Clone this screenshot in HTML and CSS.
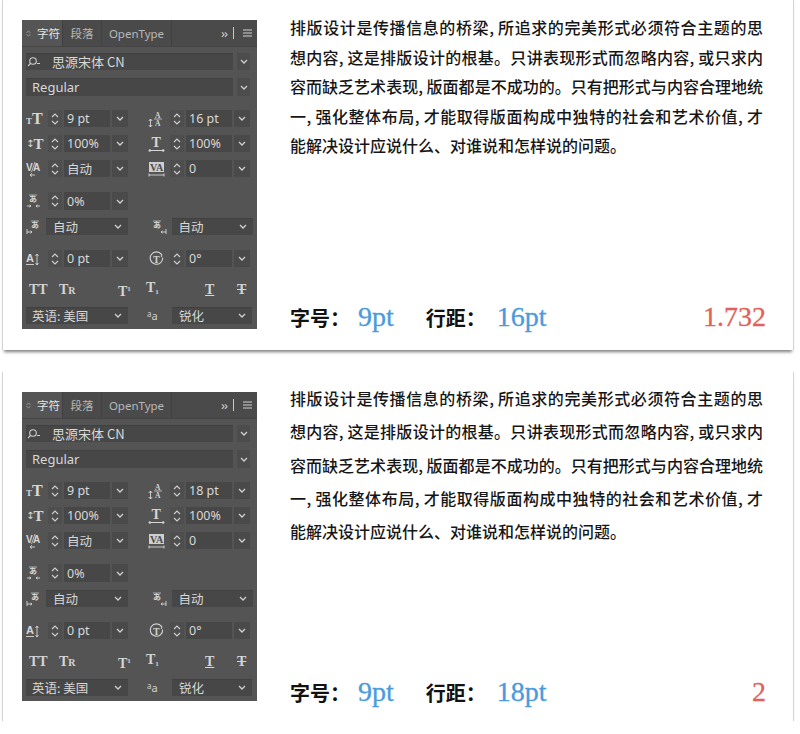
FILE: index.html
```html
<!DOCTYPE html>
<html lang="zh-CN">
<head>
<meta charset="utf-8">
<title>排版 行距对比</title>
<link rel="stylesheet" href="styles.css">
</head>
<body>
<div class="page">

  <section class="card card-a">
    <div class="panel">
      <div class="tabs">
        <div class="tab active"><svg class="grip" width="5" height="7" viewBox="0 0 5 7"><path d="M0.5 3 L2.5 0.8 L4.5 3 M0.5 4 L2.5 6.2 L4.5 4" fill="none" stroke="#9a9a9a" stroke-width="0.9"/></svg>字符</div>
        <div class="tab t2">段落</div>
        <div class="tab t3">OpenType</div>
        <div class="tabtools"><span class="more">››</span><span class="vbar"></span><svg width="9" height="8" viewBox="0 0 9 8"><path d="M0 1h9M0 4h9M0 7h9" stroke="#cfcfcf" stroke-width="1.1"/></svg></div>
      </div>

      <div class="prow frow">
        <div class="field wide"><svg class="search" width="14" height="10" viewBox="0 0 14 10"><circle cx="6" cy="4" r="3.3" fill="none" stroke="#cfcfcf" stroke-width="1.1"/><path d="M3.6 6.4 L1 9 M10 6.5 H13" stroke="#cfcfcf" stroke-width="1.1"/></svg><span class="fname">思源宋体 CN</span></div>
        <div class="chev sep"><svg width="8" height="5" viewBox="0 0 8 5"><path d="M1 1 L4 4 L7 1" fill="none" stroke="#d0d0d0" stroke-width="1.3"/></svg></div>
      </div>

      <div class="prow srow">
        <div class="field wide"><span class="reg">Regular</span></div>
        <div class="chev sep"><svg width="8" height="5" viewBox="0 0 8 5"><path d="M1 1 L4 4 L7 1" fill="none" stroke="#d0d0d0" stroke-width="1.3"/></svg></div>
      </div>

      <div class="prow r1">
        <div class="half">
          <span class="ico ico-size"><span class="small">T</span>T</span>
          <span class="spin"><svg width="8" height="14" viewBox="0 0 8 14"><path d="M1 5 L4 2 L7 5 M1 9 L4 12 L7 9" fill="none" stroke="#cfcfcf" stroke-width="1.1"/></svg></span>
          <span class="inp">9 pt</span>
          <span class="chev"><svg width="8" height="5" viewBox="0 0 8 5"><path d="M1 1 L4 4 L7 1" fill="none" stroke="#d0d0d0" stroke-width="1.3"/></svg></span>
        </div>
        <div class="half">
          <span class="ico"><svg width="16" height="18" viewBox="0 0 16 18"><text x="7" y="7.5" font-size="7.5" font-family="Liberation Serif" fill="#d6d6d6">A</text><text x="7" y="16" font-size="7.5" font-family="Liberation Serif" fill="#d6d6d6">A</text><path d="M6 9 H14" stroke="#d6d6d6" stroke-width="0.8"/><path d="M2.5 9 V17 M0.8 11 L2.5 9 L4.2 11 M0.8 15 L2.5 17 L4.2 15" fill="none" stroke="#d6d6d6" stroke-width="0.9"/></svg></span>
          <span class="spin"><svg width="8" height="14" viewBox="0 0 8 14"><path d="M1 5 L4 2 L7 5 M1 9 L4 12 L7 9" fill="none" stroke="#cfcfcf" stroke-width="1.1"/></svg></span>
          <span class="inp">16 pt</span>
          <span class="chev"><svg width="8" height="5" viewBox="0 0 8 5"><path d="M1 1 L4 4 L7 1" fill="none" stroke="#d0d0d0" stroke-width="1.3"/></svg></span>
        </div>
      </div>

      <div class="prow r2">
        <div class="half">
          <span class="ico ico-vs"><span class="arr">↕</span>T</span>
          <span class="spin"><svg width="8" height="14" viewBox="0 0 8 14"><path d="M1 5 L4 2 L7 5 M1 9 L4 12 L7 9" fill="none" stroke="#cfcfcf" stroke-width="1.1"/></svg></span>
          <span class="inp">100%</span>
          <span class="chev"><svg width="8" height="5" viewBox="0 0 8 5"><path d="M1 1 L4 4 L7 1" fill="none" stroke="#d0d0d0" stroke-width="1.3"/></svg></span>
        </div>
        <div class="half">
          <span class="ico"><svg width="17" height="18" viewBox="0 0 17 18"><text x="3.5" y="12" font-size="14" font-weight="bold" font-family="Liberation Serif" fill="#d6d6d6">T</text><path d="M1.5 15.5 H15.5" stroke="#d6d6d6" stroke-width="1"/><circle cx="1.8" cy="15.5" r="1.2" fill="#d6d6d6"/><circle cx="15.2" cy="15.5" r="1.2" fill="#d6d6d6"/></svg></span>
          <span class="spin"><svg width="8" height="14" viewBox="0 0 8 14"><path d="M1 5 L4 2 L7 5 M1 9 L4 12 L7 9" fill="none" stroke="#cfcfcf" stroke-width="1.1"/></svg></span>
          <span class="inp">100%</span>
          <span class="chev"><svg width="8" height="5" viewBox="0 0 8 5"><path d="M1 1 L4 4 L7 1" fill="none" stroke="#d0d0d0" stroke-width="1.3"/></svg></span>
        </div>
      </div>

      <div class="prow r3">
        <div class="half">
          <span class="ico"><svg width="15" height="18" viewBox="0 0 15 18"><text x="0" y="11" font-size="10" font-family="Liberation Sans" fill="#d6d6d6">V</text><text x="7" y="11" font-size="10" font-family="Liberation Sans" fill="#d6d6d6">A</text><path d="M5.5 12 L9 2" stroke="#d6d6d6" stroke-width="0.8"/><path d="M9 15 H4 M6 13.3 L4 15 L6 16.7" fill="none" stroke="#d6d6d6" stroke-width="0.9"/></svg></span>
          <span class="spin"><svg width="8" height="14" viewBox="0 0 8 14"><path d="M1 5 L4 2 L7 5 M1 9 L4 12 L7 9" fill="none" stroke="#cfcfcf" stroke-width="1.1"/></svg></span>
          <span class="inp cjk">自动</span>
          <span class="chev"><svg width="8" height="5" viewBox="0 0 8 5"><path d="M1 1 L4 4 L7 1" fill="none" stroke="#d0d0d0" stroke-width="1.3"/></svg></span>
        </div>
        <div class="half">
          <span class="ico"><svg width="17" height="18" viewBox="0 0 17 18"><rect x="1" y="2" width="15" height="10" fill="#cfcfcf"/><text x="2" y="11" font-size="10" font-weight="bold" font-family="Liberation Serif" fill="#4a4a4a">VA</text><path d="M1 15 H16" stroke="#d6d6d6" stroke-width="0.9"/><path d="M1 13.5 V16.5 M16 13.5 V16.5" stroke="#d6d6d6" stroke-width="0.9"/></svg></span>
          <span class="spin"><svg width="8" height="14" viewBox="0 0 8 14"><path d="M1 5 L4 2 L7 5 M1 9 L4 12 L7 9" fill="none" stroke="#cfcfcf" stroke-width="1.1"/></svg></span>
          <span class="inp">0</span>
          <span class="chev"><svg width="8" height="5" viewBox="0 0 8 5"><path d="M1 1 L4 4 L7 1" fill="none" stroke="#d0d0d0" stroke-width="1.3"/></svg></span>
        </div>
      </div>

      <div class="prow r4">
        <div class="half">
          <span class="ico"><svg width="15" height="18" viewBox="0 0 15 18"><text x="3" y="10" font-size="8" font-family="Noto Sans CJK JP" fill="#d6d6d6">あ</text><path d="M3 3 H11" stroke="#d6d6d6" stroke-width="0.7"/><path d="M1 14 H5 M3.5 12.8 L5 14 L3.5 15.2 M14 14 H10 M11.5 12.8 L10 14 L11.5 15.2" fill="none" stroke="#d6d6d6" stroke-width="0.9"/></svg></span>
          <span class="spin"><svg width="8" height="14" viewBox="0 0 8 14"><path d="M1 5 L4 2 L7 5 M1 9 L4 12 L7 9" fill="none" stroke="#cfcfcf" stroke-width="1.1"/></svg></span>
          <span class="inp">0%</span>
          <span class="chev"><svg width="8" height="5" viewBox="0 0 8 5"><path d="M1 1 L4 4 L7 1" fill="none" stroke="#d0d0d0" stroke-width="1.3"/></svg></span>
        </div>
      </div>

      <div class="prow r5">
        <div class="half dd">
          <span class="ico"><svg width="15" height="18" viewBox="0 0 15 18"><text x="5" y="10" font-size="8" font-family="Noto Sans CJK JP" fill="#d6d6d6">あ</text><path d="M5 3 H13" stroke="#d6d6d6" stroke-width="0.7"/><path d="M1 11 V16 M1 14 H6 M4.5 12.8 L6 14 L4.5 15.2" fill="none" stroke="#d6d6d6" stroke-width="0.9"/></svg></span>
          <span class="field dfield"><span class="cjk">自动</span><svg width="8" height="5" viewBox="0 0 8 5"><path d="M1 1 L4 4 L7 1" fill="none" stroke="#d0d0d0" stroke-width="1.3"/></svg></span>
        </div>
        <div class="half dd dd-r">
          <span class="ico"><svg width="15" height="18" viewBox="0 0 15 18"><text x="1" y="10" font-size="8" font-family="Noto Sans CJK JP" fill="#d6d6d6">あ</text><path d="M1 3 H9" stroke="#d6d6d6" stroke-width="0.7"/><path d="M14 11 V16 M14 14 H9 M10.5 12.8 L9 14 L10.5 15.2" fill="none" stroke="#d6d6d6" stroke-width="0.9"/></svg></span>
          <span class="field dfield"><span class="cjk">自动</span><svg width="8" height="5" viewBox="0 0 8 5"><path d="M1 1 L4 4 L7 1" fill="none" stroke="#d0d0d0" stroke-width="1.3"/></svg></span>
        </div>
      </div>

      <div class="prow r6">
        <div class="half">
          <span class="ico"><svg width="15" height="18" viewBox="0 0 15 18"><text x="0" y="12" font-size="11" font-family="Liberation Sans" fill="#d6d6d6">A</text><path d="M0 14.5 H8" stroke="#d6d6d6" stroke-width="0.9"/><path d="M11 4 V15 M9.5 6 L11 4 L12.5 6 M9.5 13 L11 15 L12.5 13" fill="none" stroke="#d6d6d6" stroke-width="0.9"/></svg></span>
          <span class="spin"><svg width="8" height="14" viewBox="0 0 8 14"><path d="M1 5 L4 2 L7 5 M1 9 L4 12 L7 9" fill="none" stroke="#cfcfcf" stroke-width="1.1"/></svg></span>
          <span class="inp">0 pt</span>
          <span class="chev"><svg width="8" height="5" viewBox="0 0 8 5"><path d="M1 1 L4 4 L7 1" fill="none" stroke="#d0d0d0" stroke-width="1.3"/></svg></span>
        </div>
        <div class="half">
          <span class="ico"><svg width="17" height="18" viewBox="0 0 17 18"><path d="M13.5 4.5 A6.2 6.2 0 1 0 14.6 7.5" fill="none" stroke="#d6d6d6" stroke-width="1.1"/><path d="M11.8 3.2 L14 4.6 L13.2 7" fill="none" stroke="#d6d6d6" stroke-width="1"/><text x="5.2" y="13" font-size="9.5" font-weight="bold" font-family="Liberation Serif" fill="#d6d6d6">T</text></svg></span>
          <span class="spin"><svg width="8" height="14" viewBox="0 0 8 14"><path d="M1 5 L4 2 L7 5 M1 9 L4 12 L7 9" fill="none" stroke="#cfcfcf" stroke-width="1.1"/></svg></span>
          <span class="inp">0°</span>
          <span class="chev"><svg width="8" height="5" viewBox="0 0 8 5"><path d="M1 1 L4 4 L7 1" fill="none" stroke="#d0d0d0" stroke-width="1.3"/></svg></span>
        </div>
      </div>

      <div class="prow r7">
        <span class="ty">TT</span>
        <span class="ty">T<span class="sc">R</span></span>
        <span class="ty">T<sup>1</sup></span>
        <span class="ty">T<sub>1</sub></span>
        <span class="ty under">T</span>
        <span class="ty strike">T</span>
      </div>

      <div class="prow r8">
        <span class="field lang"><span class="cjk">英语: 美国</span><svg width="8" height="5" viewBox="0 0 8 5"><path d="M1 1 L4 4 L7 1" fill="none" stroke="#d0d0d0" stroke-width="1.3"/></svg></span>
        <span class="aa"><span class="a1">a</span><span class="a2">a</span></span>
        <span class="field aafield"><span class="cjk">锐化</span><svg width="8" height="5" viewBox="0 0 8 5"><path d="M1 1 L4 4 L7 1" fill="none" stroke="#d0d0d0" stroke-width="1.3"/></svg></span>
      </div>
    </div>

    <div class="copy">
      <div class="para">
        <span class="ln">排版设计是传播信息的桥梁, 所追求的完美形式必须符合主题的思</span>
        <span class="ln">想内容, 这是排版设计的根基。只讲表现形式而忽略内容, 或只求内</span>
        <span class="ln">容而缺乏艺术表现, 版面都是不成功的。只有把形式与内容合理地统</span>
        <span class="ln">一, 强化整体布局, 才能取得版面构成中独特的社会和艺术价值, 才</span>
        <span class="ln last">能解决设计应说什么、对谁说和怎样说的问题。</span>
      </div>
      <div class="foot">
        <span class="lbl">字号：</span><span class="val">9pt</span>
        <span class="lbl lbl2">行距：</span><span class="val val2">16pt</span>
        <span class="ratio">1.732</span>
      </div>
    </div>
  </section>

  <section class="card card-b">
    <div class="panel">
      <div class="tabs">
        <div class="tab active"><svg class="grip" width="5" height="7" viewBox="0 0 5 7"><path d="M0.5 3 L2.5 0.8 L4.5 3 M0.5 4 L2.5 6.2 L4.5 4" fill="none" stroke="#9a9a9a" stroke-width="0.9"/></svg>字符</div>
        <div class="tab t2">段落</div>
        <div class="tab t3">OpenType</div>
        <div class="tabtools"><span class="more">››</span><span class="vbar"></span><svg width="9" height="8" viewBox="0 0 9 8"><path d="M0 1h9M0 4h9M0 7h9" stroke="#cfcfcf" stroke-width="1.1"/></svg></div>
      </div>

      <div class="prow frow">
        <div class="field wide"><svg class="search" width="14" height="10" viewBox="0 0 14 10"><circle cx="6" cy="4" r="3.3" fill="none" stroke="#cfcfcf" stroke-width="1.1"/><path d="M3.6 6.4 L1 9 M10 6.5 H13" stroke="#cfcfcf" stroke-width="1.1"/></svg><span class="fname">思源宋体 CN</span></div>
        <div class="chev sep"><svg width="8" height="5" viewBox="0 0 8 5"><path d="M1 1 L4 4 L7 1" fill="none" stroke="#d0d0d0" stroke-width="1.3"/></svg></div>
      </div>

      <div class="prow srow">
        <div class="field wide"><span class="reg">Regular</span></div>
        <div class="chev sep"><svg width="8" height="5" viewBox="0 0 8 5"><path d="M1 1 L4 4 L7 1" fill="none" stroke="#d0d0d0" stroke-width="1.3"/></svg></div>
      </div>

      <div class="prow r1">
        <div class="half">
          <span class="ico ico-size"><span class="small">T</span>T</span>
          <span class="spin"><svg width="8" height="14" viewBox="0 0 8 14"><path d="M1 5 L4 2 L7 5 M1 9 L4 12 L7 9" fill="none" stroke="#cfcfcf" stroke-width="1.1"/></svg></span>
          <span class="inp">9 pt</span>
          <span class="chev"><svg width="8" height="5" viewBox="0 0 8 5"><path d="M1 1 L4 4 L7 1" fill="none" stroke="#d0d0d0" stroke-width="1.3"/></svg></span>
        </div>
        <div class="half">
          <span class="ico"><svg width="16" height="18" viewBox="0 0 16 18"><text x="7" y="7.5" font-size="7.5" font-family="Liberation Serif" fill="#d6d6d6">A</text><text x="7" y="16" font-size="7.5" font-family="Liberation Serif" fill="#d6d6d6">A</text><path d="M6 9 H14" stroke="#d6d6d6" stroke-width="0.8"/><path d="M2.5 9 V17 M0.8 11 L2.5 9 L4.2 11 M0.8 15 L2.5 17 L4.2 15" fill="none" stroke="#d6d6d6" stroke-width="0.9"/></svg></span>
          <span class="spin"><svg width="8" height="14" viewBox="0 0 8 14"><path d="M1 5 L4 2 L7 5 M1 9 L4 12 L7 9" fill="none" stroke="#cfcfcf" stroke-width="1.1"/></svg></span>
          <span class="inp">18 pt</span>
          <span class="chev"><svg width="8" height="5" viewBox="0 0 8 5"><path d="M1 1 L4 4 L7 1" fill="none" stroke="#d0d0d0" stroke-width="1.3"/></svg></span>
        </div>
      </div>

      <div class="prow r2">
        <div class="half">
          <span class="ico ico-vs"><span class="arr">↕</span>T</span>
          <span class="spin"><svg width="8" height="14" viewBox="0 0 8 14"><path d="M1 5 L4 2 L7 5 M1 9 L4 12 L7 9" fill="none" stroke="#cfcfcf" stroke-width="1.1"/></svg></span>
          <span class="inp">100%</span>
          <span class="chev"><svg width="8" height="5" viewBox="0 0 8 5"><path d="M1 1 L4 4 L7 1" fill="none" stroke="#d0d0d0" stroke-width="1.3"/></svg></span>
        </div>
        <div class="half">
          <span class="ico"><svg width="17" height="18" viewBox="0 0 17 18"><text x="3.5" y="12" font-size="14" font-weight="bold" font-family="Liberation Serif" fill="#d6d6d6">T</text><path d="M1.5 15.5 H15.5" stroke="#d6d6d6" stroke-width="1"/><circle cx="1.8" cy="15.5" r="1.2" fill="#d6d6d6"/><circle cx="15.2" cy="15.5" r="1.2" fill="#d6d6d6"/></svg></span>
          <span class="spin"><svg width="8" height="14" viewBox="0 0 8 14"><path d="M1 5 L4 2 L7 5 M1 9 L4 12 L7 9" fill="none" stroke="#cfcfcf" stroke-width="1.1"/></svg></span>
          <span class="inp">100%</span>
          <span class="chev"><svg width="8" height="5" viewBox="0 0 8 5"><path d="M1 1 L4 4 L7 1" fill="none" stroke="#d0d0d0" stroke-width="1.3"/></svg></span>
        </div>
      </div>

      <div class="prow r3">
        <div class="half">
          <span class="ico"><svg width="15" height="18" viewBox="0 0 15 18"><text x="0" y="11" font-size="10" font-family="Liberation Sans" fill="#d6d6d6">V</text><text x="7" y="11" font-size="10" font-family="Liberation Sans" fill="#d6d6d6">A</text><path d="M5.5 12 L9 2" stroke="#d6d6d6" stroke-width="0.8"/><path d="M9 15 H4 M6 13.3 L4 15 L6 16.7" fill="none" stroke="#d6d6d6" stroke-width="0.9"/></svg></span>
          <span class="spin"><svg width="8" height="14" viewBox="0 0 8 14"><path d="M1 5 L4 2 L7 5 M1 9 L4 12 L7 9" fill="none" stroke="#cfcfcf" stroke-width="1.1"/></svg></span>
          <span class="inp cjk">自动</span>
          <span class="chev"><svg width="8" height="5" viewBox="0 0 8 5"><path d="M1 1 L4 4 L7 1" fill="none" stroke="#d0d0d0" stroke-width="1.3"/></svg></span>
        </div>
        <div class="half">
          <span class="ico"><svg width="17" height="18" viewBox="0 0 17 18"><rect x="1" y="2" width="15" height="10" fill="#cfcfcf"/><text x="2" y="11" font-size="10" font-weight="bold" font-family="Liberation Serif" fill="#4a4a4a">VA</text><path d="M1 15 H16" stroke="#d6d6d6" stroke-width="0.9"/><path d="M1 13.5 V16.5 M16 13.5 V16.5" stroke="#d6d6d6" stroke-width="0.9"/></svg></span>
          <span class="spin"><svg width="8" height="14" viewBox="0 0 8 14"><path d="M1 5 L4 2 L7 5 M1 9 L4 12 L7 9" fill="none" stroke="#cfcfcf" stroke-width="1.1"/></svg></span>
          <span class="inp">0</span>
          <span class="chev"><svg width="8" height="5" viewBox="0 0 8 5"><path d="M1 1 L4 4 L7 1" fill="none" stroke="#d0d0d0" stroke-width="1.3"/></svg></span>
        </div>
      </div>

      <div class="prow r4">
        <div class="half">
          <span class="ico"><svg width="15" height="18" viewBox="0 0 15 18"><text x="3" y="10" font-size="8" font-family="Noto Sans CJK JP" fill="#d6d6d6">あ</text><path d="M3 3 H11" stroke="#d6d6d6" stroke-width="0.7"/><path d="M1 14 H5 M3.5 12.8 L5 14 L3.5 15.2 M14 14 H10 M11.5 12.8 L10 14 L11.5 15.2" fill="none" stroke="#d6d6d6" stroke-width="0.9"/></svg></span>
          <span class="spin"><svg width="8" height="14" viewBox="0 0 8 14"><path d="M1 5 L4 2 L7 5 M1 9 L4 12 L7 9" fill="none" stroke="#cfcfcf" stroke-width="1.1"/></svg></span>
          <span class="inp">0%</span>
          <span class="chev"><svg width="8" height="5" viewBox="0 0 8 5"><path d="M1 1 L4 4 L7 1" fill="none" stroke="#d0d0d0" stroke-width="1.3"/></svg></span>
        </div>
      </div>

      <div class="prow r5">
        <div class="half dd">
          <span class="ico"><svg width="15" height="18" viewBox="0 0 15 18"><text x="5" y="10" font-size="8" font-family="Noto Sans CJK JP" fill="#d6d6d6">あ</text><path d="M5 3 H13" stroke="#d6d6d6" stroke-width="0.7"/><path d="M1 11 V16 M1 14 H6 M4.5 12.8 L6 14 L4.5 15.2" fill="none" stroke="#d6d6d6" stroke-width="0.9"/></svg></span>
          <span class="field dfield"><span class="cjk">自动</span><svg width="8" height="5" viewBox="0 0 8 5"><path d="M1 1 L4 4 L7 1" fill="none" stroke="#d0d0d0" stroke-width="1.3"/></svg></span>
        </div>
        <div class="half dd dd-r">
          <span class="ico"><svg width="15" height="18" viewBox="0 0 15 18"><text x="1" y="10" font-size="8" font-family="Noto Sans CJK JP" fill="#d6d6d6">あ</text><path d="M1 3 H9" stroke="#d6d6d6" stroke-width="0.7"/><path d="M14 11 V16 M14 14 H9 M10.5 12.8 L9 14 L10.5 15.2" fill="none" stroke="#d6d6d6" stroke-width="0.9"/></svg></span>
          <span class="field dfield"><span class="cjk">自动</span><svg width="8" height="5" viewBox="0 0 8 5"><path d="M1 1 L4 4 L7 1" fill="none" stroke="#d0d0d0" stroke-width="1.3"/></svg></span>
        </div>
      </div>

      <div class="prow r6">
        <div class="half">
          <span class="ico"><svg width="15" height="18" viewBox="0 0 15 18"><text x="0" y="12" font-size="11" font-family="Liberation Sans" fill="#d6d6d6">A</text><path d="M0 14.5 H8" stroke="#d6d6d6" stroke-width="0.9"/><path d="M11 4 V15 M9.5 6 L11 4 L12.5 6 M9.5 13 L11 15 L12.5 13" fill="none" stroke="#d6d6d6" stroke-width="0.9"/></svg></span>
          <span class="spin"><svg width="8" height="14" viewBox="0 0 8 14"><path d="M1 5 L4 2 L7 5 M1 9 L4 12 L7 9" fill="none" stroke="#cfcfcf" stroke-width="1.1"/></svg></span>
          <span class="inp">0 pt</span>
          <span class="chev"><svg width="8" height="5" viewBox="0 0 8 5"><path d="M1 1 L4 4 L7 1" fill="none" stroke="#d0d0d0" stroke-width="1.3"/></svg></span>
        </div>
        <div class="half">
          <span class="ico"><svg width="17" height="18" viewBox="0 0 17 18"><path d="M13.5 4.5 A6.2 6.2 0 1 0 14.6 7.5" fill="none" stroke="#d6d6d6" stroke-width="1.1"/><path d="M11.8 3.2 L14 4.6 L13.2 7" fill="none" stroke="#d6d6d6" stroke-width="1"/><text x="5.2" y="13" font-size="9.5" font-weight="bold" font-family="Liberation Serif" fill="#d6d6d6">T</text></svg></span>
          <span class="spin"><svg width="8" height="14" viewBox="0 0 8 14"><path d="M1 5 L4 2 L7 5 M1 9 L4 12 L7 9" fill="none" stroke="#cfcfcf" stroke-width="1.1"/></svg></span>
          <span class="inp">0°</span>
          <span class="chev"><svg width="8" height="5" viewBox="0 0 8 5"><path d="M1 1 L4 4 L7 1" fill="none" stroke="#d0d0d0" stroke-width="1.3"/></svg></span>
        </div>
      </div>

      <div class="prow r7">
        <span class="ty">TT</span>
        <span class="ty">T<span class="sc">R</span></span>
        <span class="ty">T<sup>1</sup></span>
        <span class="ty">T<sub>1</sub></span>
        <span class="ty under">T</span>
        <span class="ty strike">T</span>
      </div>

      <div class="prow r8">
        <span class="field lang"><span class="cjk">英语: 美国</span><svg width="8" height="5" viewBox="0 0 8 5"><path d="M1 1 L4 4 L7 1" fill="none" stroke="#d0d0d0" stroke-width="1.3"/></svg></span>
        <span class="aa"><span class="a1">a</span><span class="a2">a</span></span>
        <span class="field aafield"><span class="cjk">锐化</span><svg width="8" height="5" viewBox="0 0 8 5"><path d="M1 1 L4 4 L7 1" fill="none" stroke="#d0d0d0" stroke-width="1.3"/></svg></span>
      </div>
    </div>

    <div class="copy">
      <div class="para">
        <span class="ln">排版设计是传播信息的桥梁, 所追求的完美形式必须符合主题的思</span>
        <span class="ln">想内容, 这是排版设计的根基。只讲表现形式而忽略内容, 或只求内</span>
        <span class="ln">容而缺乏艺术表现, 版面都是不成功的。只有把形式与内容合理地统</span>
        <span class="ln">一, 强化整体布局, 才能取得版面构成中独特的社会和艺术价值, 才</span>
        <span class="ln last">能解决设计应说什么、对谁说和怎样说的问题。</span>
      </div>
      <div class="foot">
        <span class="lbl">字号：</span><span class="val">9pt</span>
        <span class="lbl lbl2">行距：</span><span class="val val2">18pt</span>
        <span class="ratio">2</span>
      </div>
    </div>
  </section>

</div>
</body>
</html>
```

FILE: styles.css
```css
* { box-sizing: border-box; margin: 0; padding: 0; }

html, body { background: #ffffff; }

body {
  font-family: "Noto Sans CJK SC", sans-serif;
  color: #1c1c1c;
}

.page {
  display: flex;
  flex-direction: column;
  gap: 22px;
  padding-left: 3px;
}

.card {
  width: 790px;
  background: #ffffff;
  display: flex;
  padding-left: 19px;
  box-shadow: -1px 0 0 #d4d4d4, 1px 0 0 #d4d4d4, 0 3px 3px -1px rgba(0, 0, 0, 0.5);
}

.card-a { height: 350px; }
.card-b { height: 349px; }

/* ---------- Illustrator character panel ---------- */
.panel {
  width: 235px;
  height: 309px;
  margin-top: 20px;
  flex-shrink: 0;
  background: #545454;
  color: #d8d8d8;
  font-family: "Noto Sans", "Noto Sans CJK SC", sans-serif;
  font-size: 12.5px;
  display: flex;
  flex-direction: column;
}

.tabs {
  height: 27px;
  display: flex;
  background: #4a4a4a;
  font-size: 11.5px;
  color: #b8b8b8;
  border-bottom: 1px solid #454545;
}

.tab {
  display: flex;
  align-items: center;
  justify-content: center;
  border-right: 1px solid #404040;
  font-family: "Noto Sans CJK SC", sans-serif;
}

.tab.active {
  width: 41px;
  background: #555555;
  color: #e4e4e4;
  justify-content: flex-start;
  padding-left: 4px;
  gap: 6px;
}

.tab.t2 { width: 39px; }
.tab.t3 { width: 70px; font-family: "Noto Sans", sans-serif; }

.tabtools {
  flex: 1;
  display: flex;
  align-items: center;
  justify-content: flex-end;
  padding-right: 5px;
  color: #d0d0d0;
}

.more { font-size: 13px; letter-spacing: -1px; margin-right: 6px; }
.vbar { width: 1px; height: 12px; background: #c8c8c8; margin-right: 9px; }

.prow {
  display: flex;
  align-items: center;
  padding: 0 4px;
  height: 17px;
}

.field {
  background: #474747;
  height: 100%;
  display: flex;
  align-items: center;
  box-shadow: inset 0 1px 0 #404040;
}

.frow { margin-top: 6px; }
.srow { margin-top: 8px; height: 18px; }

.wide { width: 207px; }
.search { margin-left: 1px; margin-right: 11px; }
.fname { font-family: "Noto Sans CJK SC", sans-serif; font-size: 13px; }
.reg { padding-left: 6px; font-size: 13px; }

.chev {
  width: 16px;
  height: 100%;
  background: #4a4a4a;
  display: flex;
  align-items: center;
  justify-content: center;
}
.chev.sep { width: 13px; margin-left: 4px; background: #4c4c4c; }

.r1 { margin-top: 14px; }
.r2 { margin-top: 8px; }
.r3 { margin-top: 8px; }
.r4 { margin-top: 15px; height: 18px; }
.r5 { margin-top: 8px; }
.r6 { margin-top: 15px; }
.r7 { margin-top: 12px; height: 18px; }
.r8 { margin-top: 10px; }

.half {
  width: 102px;
  height: 100%;
  display: flex;
  align-items: center;
}
.half + .half { margin-left: 20px; }

.ico {
  width: 17px;
  height: 18px;
  display: flex;
  align-items: center;
  justify-content: flex-start;
  flex-shrink: 0;
  font-family: "Liberation Serif", serif;
  font-weight: bold;
  color: #d8d8d8;
}

.ico-size { font-size: 16px; align-items: baseline; line-height: 18px; }
.ico-size .small { font-size: 9px; margin-right: 0; }
.ico-vs { font-size: 15px; line-height: 18px; }
.ico-vs .arr { font-size: 10px; font-family: "DejaVu Sans", sans-serif; font-weight: normal; margin-right: -1px; }

.spin {
  width: 14px;
  height: 100%;
  margin-left: 5px;
  background: #4e4e4e;
  display: flex;
  align-items: center;
  justify-content: center;
}

.inp {
  width: 46px;
  height: 100%;
  margin-left: 2px;
  background: #474747;
  padding-left: 3px;
  display: flex;
  align-items: center;
  font-size: 12.5px;
  white-space: nowrap;
}

.inp + .chev { margin-left: 2px; }

.cjk { font-family: "Noto Sans CJK SC", sans-serif; font-size: 12.5px; }

.dd .dfield {
  flex: 1;
  margin-left: 3px;
  justify-content: space-between;
  padding: 0 6px 0 7px;
}
.dd-r { margin-left: 24px !important; width: 102px; }
.dd-r .dfield { margin-left: 3px; }

.r7 {
  display: grid;
  grid-template-columns: 30px 59px 28px 59px 32px 20px;
  padding-left: 7px;
  align-items: center;
  font-family: "Liberation Serif", serif;
  font-weight: bold;
  font-size: 14px;
  color: #d4d4d4;
}
.ty { line-height: 18px; white-space: nowrap; }
.ty .sc { font-size: 10px; }
.ty sup, .ty sub { font-size: 7px; }
.ty sup { vertical-align: 5px; }
.ty sub { vertical-align: -2px; }
.ty.under { text-decoration: underline; text-underline-offset: 1px; }
.ty.strike { text-decoration: line-through; }

.lang {
  width: 102px;
  justify-content: space-between;
  padding: 0 6px 0 6px;
}
.aa {
  width: 44px;
  padding-left: 19px;
  font-family: "Noto Sans", sans-serif;
  color: #d0d0d0;
  display: flex;
  align-items: baseline;
}
.aa .a1 { font-size: 8px; position: relative; top: -3px; }
.aa .a2 { font-size: 11px; }
.aafield {
  width: 80px;
  justify-content: space-between;
  padding: 0 6px 0 7px;
}

/* ---------- Copy column ---------- */
.copy {
  width: 476px;
  margin-left: 33px;
  display: flex;
  flex-direction: column;
}

.card-a .copy { padding-top: 13px; padding-bottom: 17px; }
.card-b .copy { padding-top: 10px; padding-bottom: 13px; }

.para {
  width: 473px;
  font-size: 16px;
  font-weight: 500;
  color: #161616;
}
.card-a .para { line-height: 29.6px; }
.card-b .para { line-height: 33.3px; }

.ln {
  display: block;
  text-align: justify;
  text-align-last: justify;
  white-space: nowrap;
}
.ln.last { text-align-last: left; }

.foot {
  margin-top: auto;
  display: flex;
  align-items: baseline;
}

.lbl {
  font-family: "Noto Sans CJK SC", sans-serif;
  font-weight: 700;
  font-size: 20px;
  color: #121212;
}
.lbl2 { margin-left: 32px; }

.val {
  font-family: "Liberation Serif", serif;
  font-size: 28px;
  color: #4a9bdc;
  margin-left: 8px;
  -webkit-text-stroke: 0.3px #4a9bdc;
}
.val2 { margin-left: 11px; }

.ratio {
  margin-left: auto;
  font-family: "Liberation Serif", serif;
  font-size: 28px;
  color: #e0625b;
  -webkit-text-stroke: 0.3px #e0625b;
}
```
